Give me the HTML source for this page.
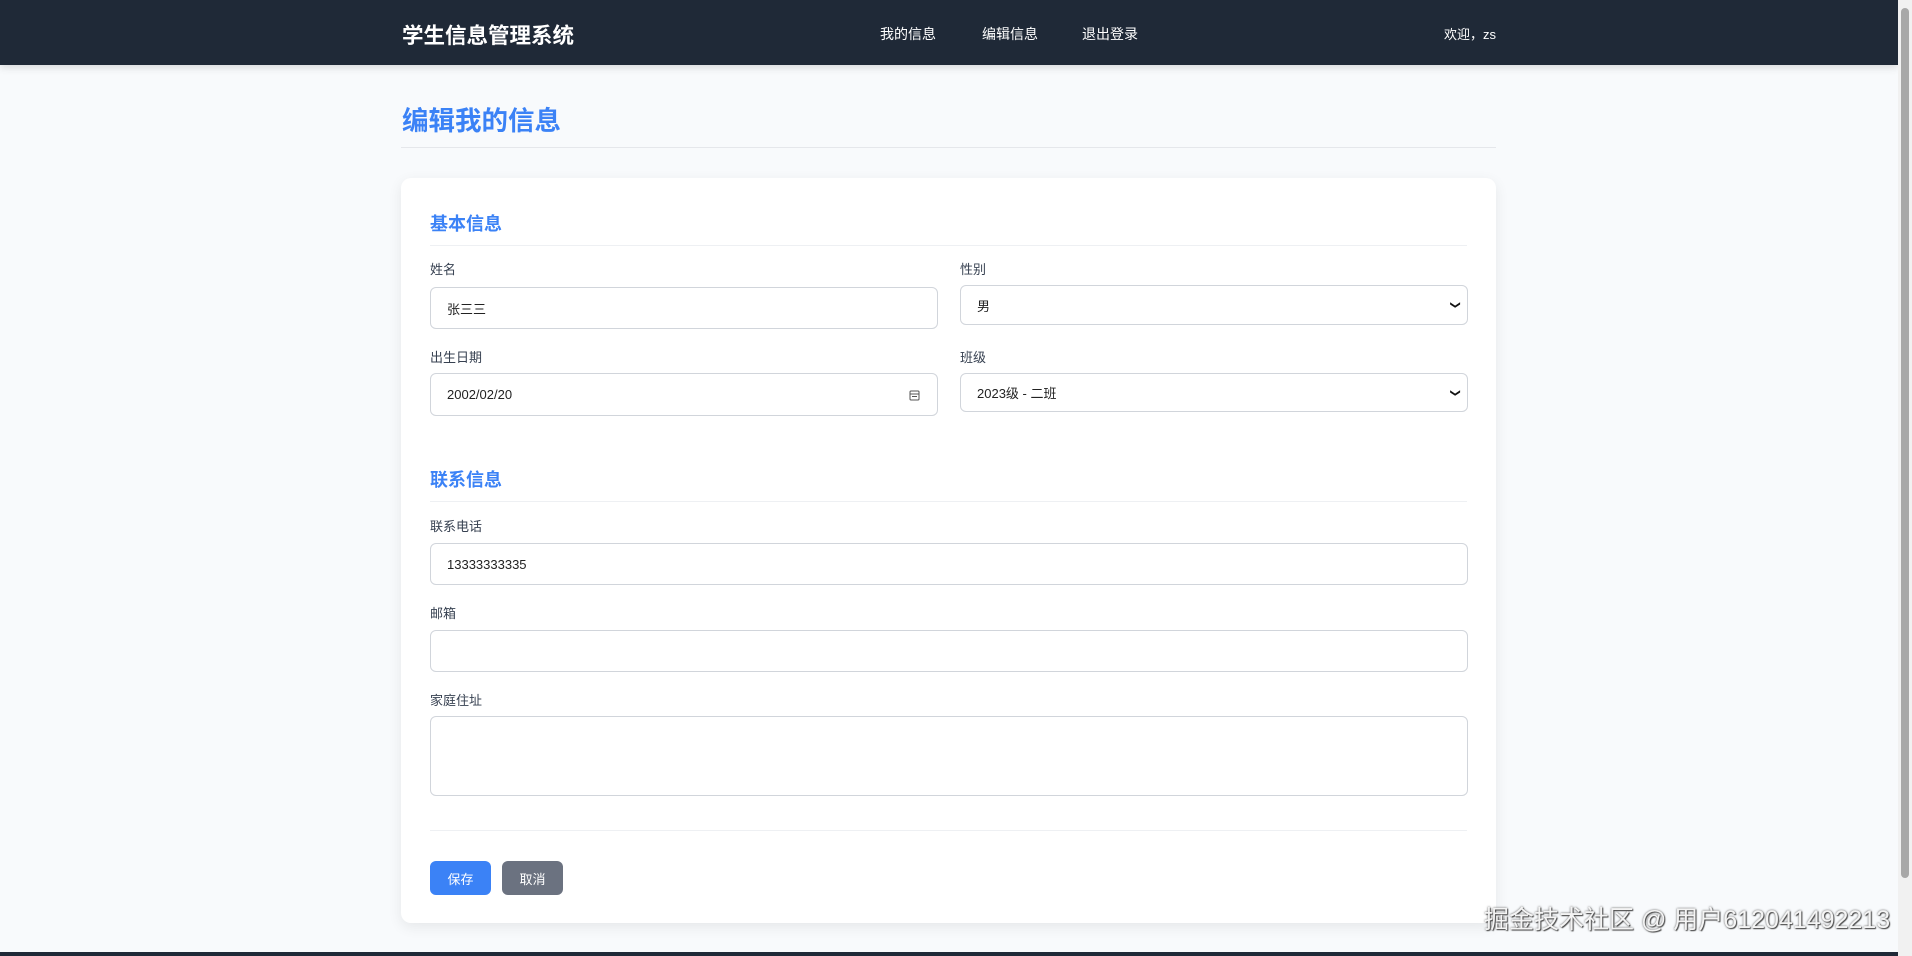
<!DOCTYPE html>
<html><head><meta charset="utf-8"><style>
*{box-sizing:border-box;margin:0;padding:0}
body{width:1912px;height:956px;overflow:hidden;background:#f8fafc;font-family:"Liberation Sans","Noto Sans CJK SC",sans-serif;color:#333;position:relative}
.nav{position:absolute;left:0;top:0;width:1898px;height:65px;background:#1f2937;box-shadow:0 2px 8px rgba(0,0,0,.15);color:#fff}
.logo{position:absolute;left:402px;top:19px;font-size:21.5px;font-weight:bold}
.links a{position:absolute;top:24px;font-size:14px;color:#fff;text-decoration:none}
.welcome{position:absolute;right:402px;top:24px;font-size:13px}
h1{position:absolute;left:402px;top:99px;font-size:26.5px;color:#3b82f6;font-weight:bold}
.hr1{position:absolute;left:401px;top:147px;width:1095px;height:1px;background:#e5e7eb}
.card{position:absolute;left:401px;top:178px;width:1095px;height:745px;background:#fff;border-radius:10px;box-shadow:0 4px 14px rgba(0,0,0,.08)}
.sec{position:absolute;left:29px;font-size:18px;font-weight:bold;color:#3b82f6}
.line{position:absolute;left:29px;width:1037px;height:1px;background:#eef0f3}
.lbl{position:absolute;font-size:13px;color:#374151}
.inp{position:absolute;border:1px solid #d1d5db;border-radius:6px;background:#fff;font-size:13px;color:#222;padding-left:16px;display:flex;align-items:center}
.chev{position:absolute;right:8px;top:50%;transform:translateY(-50%) rotate(90deg);font-size:10px;color:#111}
.btn{position:absolute;top:683px;height:34px;border-radius:6px;color:#fff;font-size:13px;display:flex;align-items:center;justify-content:center;width:61px}
.foot{position:absolute;left:0;bottom:0;width:1898px;height:4px;background:#1f2937}
.sb{position:absolute;right:0;top:0;width:14px;height:956px;background:#f1f1f1}
.sbt{position:absolute;right:3px;top:8px;width:8px;height:870px;background:#a8a8a8;border-radius:4px}
.wm{position:absolute;left:1484px;top:900px;font-size:25px;color:#f4f4f4;text-shadow:0 0 2px #555,1px 1px 1px #444;white-space:nowrap}
</style></head><body>
<div class="nav">
<div class="logo">学生信息管理系统</div>
<div class="links"><a style="left:880px">我的信息</a><a style="left:982px">编辑信息</a><a style="left:1082px">退出登录</a></div>
<div class="welcome">欢迎，zs</div>
</div>
<h1>编辑我的信息</h1>
<div class="hr1"></div>
<div class="card">
<div class="sec" style="top:32px">基本信息</div>
<div class="line" style="top:67px"></div>
<div class="lbl" style="left:29px;top:81px">姓名</div>
<div class="inp" style="left:29px;top:109px;width:508px;height:42px">张三三</div>
<div class="lbl" style="left:559px;top:81px">性别</div>
<div class="inp" style="left:559px;top:107px;width:508px;height:40px">男<span class="chev">&#10095;</span></div>
<div class="lbl" style="left:29px;top:169px">出生日期</div>
<div class="inp" style="left:29px;top:195px;width:508px;height:43px">2002/02/20<svg style="position:absolute;right:17px;top:16px" width="11" height="11" viewBox="0 0 11 11"><rect x="1" y="1" width="9" height="9" rx="1" fill="none" stroke="#555"/><line x1="1" y1="4" x2="10" y2="4" stroke="#555"/><line x1="3" y1="6.5" x2="8" y2="6.5" stroke="#555"/></svg></div>
<div class="lbl" style="left:559px;top:169px">班级</div>
<div class="inp" style="left:559px;top:195px;width:508px;height:39px">2023级 - 二班<span class="chev">&#10095;</span></div>
<div class="sec" style="top:288px">联系信息</div>
<div class="line" style="top:323px"></div>
<div class="lbl" style="left:29px;top:338px">联系电话</div>
<div class="inp" style="left:29px;top:365px;width:1038px;height:42px">13333333335</div>
<div class="lbl" style="left:29px;top:425px">邮箱</div>
<div class="inp" style="left:29px;top:452px;width:1038px;height:42px"></div>
<div class="lbl" style="left:29px;top:512px">家庭住址</div>
<div class="inp" style="left:29px;top:538px;width:1038px;height:80px"></div>
<div class="line" style="top:652px"></div>
<div class="btn" style="left:29px;background:#3b82f6">保存</div>
<div class="btn" style="left:101px;background:#6b7280">取消</div>
</div>
<div class="foot"></div>
<div class="sb"><div class="sbt"></div></div>
<div class="wm">掘金技术社区 @ 用户612041492213</div>
</body></html>
